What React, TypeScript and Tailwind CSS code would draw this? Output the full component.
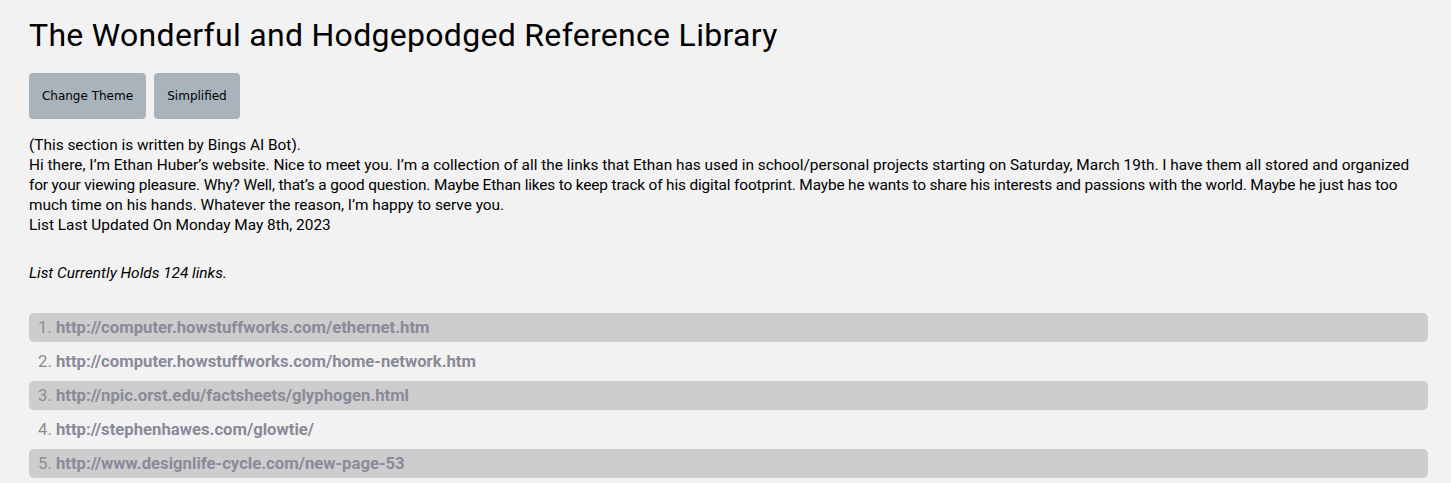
import React from "react";

const links = [
  "http://computer.howstuffworks.com/ethernet.htm",
  "http://computer.howstuffworks.com/home-network.htm",
  "http://npic.orst.edu/factsheets/glyphogen.html",
  "http://stephenhawes.com/glowtie/",
  "http://www.designlife-cycle.com/new-page-53",
];

export default function App() {
  return (
    <div className="min-h-screen bg-[#f2f2f2] pl-[29px] pr-[23px] pt-[14px] text-black" style={{ fontFamily: "Roboto, 'Liberation Sans', sans-serif" }}>
      <h1 className="text-[32px] font-normal leading-[42px] tracking-[0.3px]">The Wonderful and Hodgepodged Reference Library</h1>
      <div className="mt-[17px] flex gap-2" style={{ fontFamily: "'DejaVu Sans', Verdana, sans-serif" }}>
        <button className="h-[46px] w-[117px] rounded-[4px] bg-[#a8b3bc] text-[12px] text-black">Change Theme</button>
        <button className="h-[46px] w-[86px] rounded-[4px] bg-[#a8b3bc] text-[12px] text-black">Simplified</button>
      </div>
      <div className="mt-[16px] text-[15.4px] leading-[20px] text-black">
        <p>(This section is written by Bings AI Bot).</p>
        <p>
          <span className="block whitespace-nowrap">Hi there, I’m Ethan Huber’s website. Nice to meet you. I’m a collection of all the links that Ethan has used in school/personal projects starting on Saturday, March 19th. I have them all stored and organized</span>
          <span className="block whitespace-nowrap tracking-[-0.15px]">for your viewing pleasure. Why? Well, that’s a good question. Maybe Ethan likes to keep track of his digital footprint. Maybe he wants to share his interests and passions with the world. Maybe he just has too</span>
          <span className="block whitespace-nowrap">much time on his hands. Whatever the reason, I’m happy to serve you.</span>
        </p>
        <p>List Last Updated On Monday May 8th, 2023</p>
        <p className="mt-[28px] italic">List Currently Holds 124 links.</p>
      </div>
      <ol className="mt-[30px] flex flex-col gap-[5px]">
        {links.map((l, i) => (
          <li
            key={i}
            className={`flex h-[29px] items-center rounded-[5px] pl-[9px] text-[16.7px] ${i % 2 === 0 ? "bg-[#cdcdcd]" : ""}`}
          >
            <span className="text-[#8d8d8d]">{i + 1}.&nbsp;</span>
            <a className="font-bold text-[#8a8a98]">{l}</a>
          </li>
        ))}
      </ol>
    </div>
  );
}
